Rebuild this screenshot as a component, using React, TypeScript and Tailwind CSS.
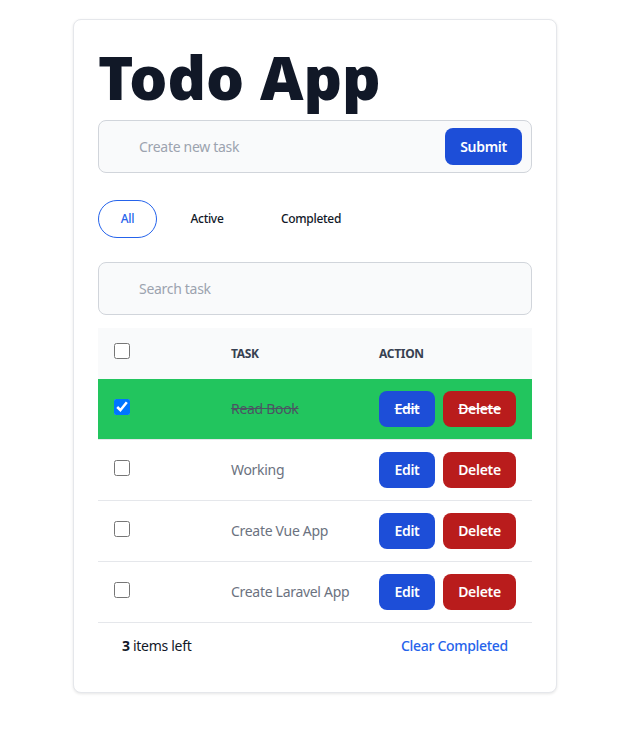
import React from "react";

const tasks = [
  { name: "Read Book", done: true },
  { name: "Working", done: false },
  { name: "Create Vue App", done: false },
  { name: "Create Laravel App", done: false },
];

export default function App() {
  return (
    <div className="min-h-screen bg-white" style={{ fontFamily: '"Noto Sans", "Open Sans", sans-serif' }}>
      <div className="pt-[19px] pl-[73px]">
        <div className="w-[484px] rounded-lg border border-[#e5e7eb] bg-white px-6 pt-[24px] pb-[23px] shadow-[0_1px_3px_rgba(0,0,0,0.1)] tracking-[-0.3px]">
          <h1 className="mt-[3px] text-[60px] leading-[60px] font-black tracking-normal text-[#111827]">Todo App</h1>
          <div className="mt-[13px] flex h-[53px] items-center rounded-lg border border-[#d1d5db] bg-[#f9fafb] pl-10 pr-[9px]">
            <input
              className="flex-1 bg-transparent text-sm text-[#111827] outline-none placeholder:text-[#9ca3af]"
              placeholder="Create new task"
            />
            <button className="h-[37px] w-[77px] rounded-lg bg-[#1d4ed8] text-sm font-semibold text-white">Submit</button>
          </div>
          <div className="mt-[27px] flex items-center">
            <button className="h-[38px] w-[59px] rounded-full border border-[#2563eb] text-xs font-medium text-[#2563eb]">All</button>
            <button className="h-[38px] w-[100px] text-xs font-medium text-[#111827]">Active</button>
            <button className="h-[38px] w-[108px] text-xs font-medium text-[#111827]">Completed</button>
          </div>
          <div className="mt-[24px] flex h-[53px] items-center rounded-lg border border-[#d1d5db] bg-[#f9fafb] pl-10">
            <input
              className="flex-1 bg-transparent text-sm text-[#111827] outline-none placeholder:text-[#9ca3af]"
              placeholder="Search task"
            />
          </div>
          <table className="mt-[13px] w-full table-fixed text-left text-sm">
            <thead className="bg-[#f9fafb] text-xs font-bold uppercase text-[#374151]">
              <tr className="h-[51px]">
                <th className="w-[109px] px-4">
                  <input type="checkbox" className="mb-[5px] block h-4 w-4" />
                </th>
                <th className="w-[148px] px-6">Task</th>
                <th className="pl-6">Action</th>
              </tr>
            </thead>
            <tbody>
              {tasks.map((t) => (
                <tr
                  key={t.name}
                  className={
                    t.done
                      ? "h-[60px] bg-[#22c55e]"
                      : "h-[61px] border-t border-[#e5e7eb] bg-white"
                  }
                >
                  <td className="px-4">
                    <input type="checkbox" defaultChecked={t.done} className="mb-[3px] block h-4 w-4" />
                  </td>
                  <td
                    className={
                      t.done
                        ? "px-6 whitespace-nowrap text-[#4b5563] line-through"
                        : "px-6 whitespace-nowrap text-[#6b7280]"
                    }
                  >
                    {t.name}
                  </td>
                  <td className="pl-6">
                    <div className="flex gap-2">
                      <button className="h-9 w-14 shrink-0 rounded-lg bg-[#1d4ed8] text-sm font-semibold text-white">
                        <span className={t.done ? "line-through" : ""}>Edit</span>
                      </button>
                      <button className="h-9 w-[73px] shrink-0 rounded-lg bg-[#b91c1c] text-sm font-semibold text-white">
                        <span className={t.done ? "line-through" : ""}>Delete</span>
                      </button>
                    </div>
                  </td>
                </tr>
              ))}
              <tr className="border-t border-[#e5e7eb]" />
            </tbody>
          </table>
          <div className="flex h-[47px] items-center justify-between px-6 text-sm">
            <span className="text-[#111827]">
              <span className="font-bold">3</span> items left
            </span>
            <button className="font-medium text-[#2563eb]">Clear Completed</button>
          </div>
        </div>
      </div>
    </div>
  );
}
